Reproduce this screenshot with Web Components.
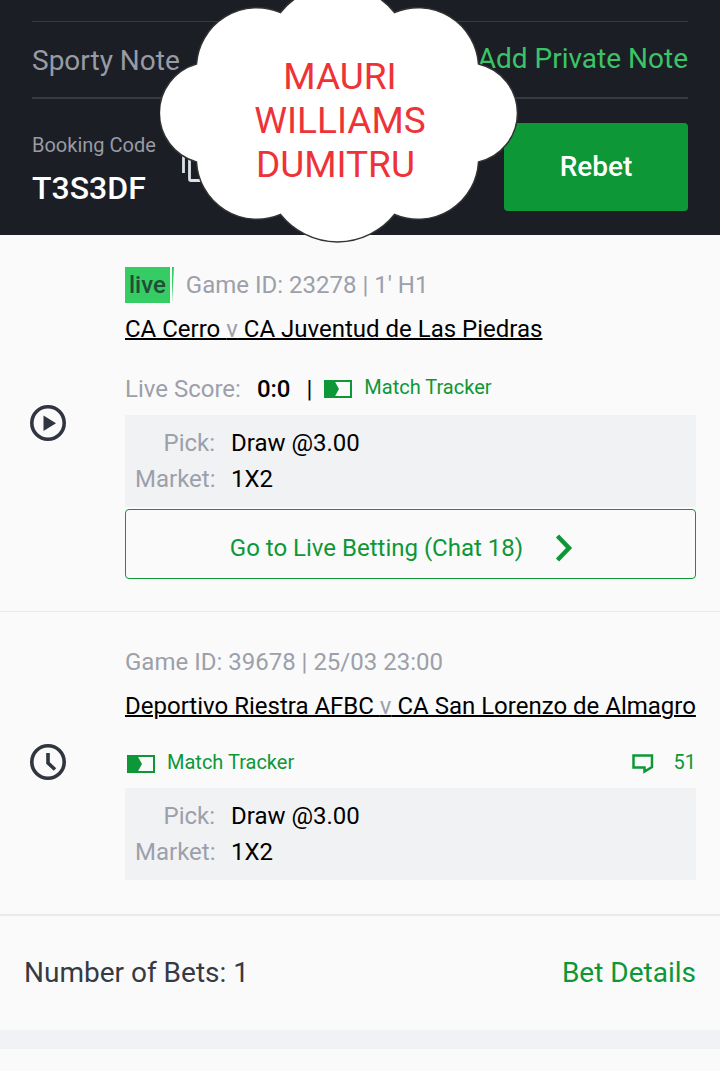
<!DOCTYPE html>
<html lang="en">
<head>
<meta charset="utf-8">
<meta name="viewport" content="width=device-width, initial-scale=1">
<title>Bet slip</title>
<style>
  body { margin: 0; background: #fafafa; color: #000; font-family: Roboto, sans-serif; font-size: 24px; line-height: 36px; }
</style>
</head>
<body>
<bet-page></bet-page>

<template id="t-bet-page">
  <style>
    :host { display: block; --green: #0d9737; --mint: #35cc62; --muted: #9ca0ab; --ink: #353a45; --panel: #f1f2f4; --rule: #e8e9eb; }
  </style>
  <slip-header code="T3S3DF">
    <name-cloud slot="overlay">MAURI<br>WILLIAMS<br>DUMITRU&nbsp;</name-cloud>
  </slip-header>
  <main>
    <bet-card status="live" home="CA Cerro" away="CA Juventud de Las Piedras">
      <live-badge slot="meta">live</live-badge>
      <span slot="meta">Game ID: 23278 | 1' H1</span>
      <live-score slot="info" score="0:0"></live-score>
      <match-tracker slot="info"></match-tracker>
      <pick-box slot="pick" pick="Draw @3.00" market="1X2"></pick-box>
      <live-link slot="pick">Go to Live Betting (Chat 18)</live-link>
    </bet-card>
    <bet-card status="pending" home="Deportivo Riestra AFBC" away="CA San Lorenzo de Almagro">
      <span slot="meta">Game ID: 39678 | 25/03 23:00</span>
      <match-tracker slot="info" class="lead"></match-tracker>
      <chat-count slot="info">51</chat-count>
      <pick-box slot="pick" pick="Draw @3.00" market="1X2"></pick-box>
    </bet-card>
  </main>
  <slip-footer>Number of Bets: 1</slip-footer>
</template>

<template id="t-slip-header">
  <style>
    :host { display: block; position: relative; background: #1b1e25; padding: 21px 32px 24px; }
    .note { display: flex; justify-content: space-between; align-items: center; height: 75px; border-top: 1px solid #363a43; border-bottom: 2px solid #363a43; font-size: 28px; }
    .note span { color: #989ba3; padding-top: 2px; }
    .note a { color: #3bc466; text-decoration: none; padding-bottom: 2px; }
    .booking { display: flex; align-items: center; padding-top: 24px; }
    .booking p { margin: 0; color: #989ba3; font-size: 20px; line-height: 44px; }
    .booking strong { display: block; padding-bottom: 2px; color: #fff; font-size: 32px; font-weight: 500; line-height: 42px; }
    .copy { margin-left: 26px; padding: 0; border: 0; background: none; height: 30px; }
    .copy svg { display: block; }
    .rebet { margin-left: auto; width: 184px; height: 88px; padding: 0 0 2px; border: 0; border-radius: 4px; background: var(--green); color: #fff; font: 500 28px Roboto, sans-serif; }
  </style>
  <div class="note"><span>Sporty Note</span><a href="#note">Add Private Note</a></div>
  <div class="booking">
    <p>Booking Code<strong></strong></p>
    <button class="copy" type="button" aria-label="Copy booking code">
      <svg width="26" height="30" viewBox="0 0 26 30" fill="none" stroke="#dce0ea" stroke-width="2.800"><path d="M1.500 21V1.500H18M7.500 7H24.500V28.500H9Q7.500 28.500 7.500 27z"/></svg>
    </button>
    <button class="rebet" type="button">Rebet</button>
  </div>
  <slot name="overlay"></slot>
</template>

<template id="t-name-cloud">
  <style>
    :host { position: absolute; left: calc(50% - 200px); top: 0; width: 358px; height: 244px; overflow: hidden; display: grid; place-items: start center; color: #ee3338; font-size: 37px; line-height: 44px; text-align: center; }
    svg { grid-area: 1 / 1; }
    div { grid-area: 1 / 1; position: relative; padding: 55px 0 0 2px; }
  </style>
  <svg width="358" height="244" viewBox="160 0 358 244" aria-hidden="true">
    <path d="M196.500 64A60.600 60.600 0 0 1 280.500 12.500A73 73 0 0 1 394.500 12.500A60.600 60.600 0 0 1 478.500 64A50.300 50.300 0 0 1 478.500 162A60.600 60.600 0 0 1 394.500 214.500A73 73 0 0 1 280.500 214.500A60.600 60.600 0 0 1 196.500 162A50.900 50.900 0 0 1 196.500 64z" fill="#fff" stroke="#333" stroke-width="1.500"/>
  </svg>
  <div><slot></slot></div>
</template>

<template id="t-bet-card">
  <style>
    :host { display: grid; grid-template-columns: 36px minmax(0, 1fr); column-gap: 59px; align-items: center; padding: 32px 24px 32px 30px; border-bottom: 1px solid var(--rule); }
    :host([status="pending"]) { padding-bottom: 34px; border-bottom-width: 2px; }
    :host([status="pending"]) .info { height: 32px; }
    .icon { display: block; }
    .meta { display: flex; color: var(--muted); }
    .teams { display: block; margin: 8px 0 24px; color: #000; white-space: nowrap; text-decoration: underline; text-decoration-thickness: 2px; }
    .teams span { color: var(--muted); }
    .info { display: flex; height: 36px; margin-bottom: 8px; }
  </style>
  <svg class="icon" width="36" height="36" viewBox="0 0 36 36"><circle cx="18" cy="18" r="16.200" fill="none" stroke="#30353f" stroke-width="3.600"/><path class="glyph"/></svg>
  <article>
    <div class="meta"><slot name="meta"></slot></div>
    <a class="teams" href="#match"></a>
    <div class="info"><slot name="info"></slot></div>
    <slot name="pick"></slot>
  </article>
</template>

<template id="t-live-badge">
  <style>
    :host { display: flex; margin-right: 12px; }
    span { padding: 0 4px; background: #35cd63; color: #234b35; font-weight: 500; }
    svg { display: block; margin-left: 1px; }
  </style>
  <span><slot></slot></span><svg width="3" height="36" viewBox="0 0 3 36" aria-hidden="true"><path d="M1 0H3L1 36z" fill="#35cd63"/></svg>
</template>

<template id="t-live-score">
  <style>
    :host { display: flex; gap: 16px; margin-right: 12px; color: var(--muted); }
    b { color: #000; font-weight: 500; }
    i { color: #000; font-style: normal; }
  </style>
  <span>Live Score:</span><b></b><i>|</i>
</template>

<template id="t-match-tracker">
  <style>
    :host { display: block; }
    :host(.lead) { margin-left: 2px; }
    :host(.lead) a { line-height: 28px; }
    :host(.lead) svg { margin-top: 7px; }
    a { display: flex; gap: 12px; color: var(--green); text-decoration: none; font-size: 20px; line-height: 32px; }
    svg { margin-top: 9px; }
  </style>
  <a href="#tracker"><svg width="28" height="18" viewBox="0 0 28 18" aria-hidden="true"><path d="M1 1H27V17H1z" fill="none" stroke="#0d9737" stroke-width="2"/><path d="M0 0H10L15 9L10 18H0z" fill="#0d9737"/></svg>Match Tracker</a>
</template>

<template id="t-chat-count">
  <style>
    :host { display: block; margin-left: auto; }
    a { display: flex; gap: 20px; color: var(--green); text-decoration: none; font-size: 20px; line-height: 28px; }
    svg { margin-top: 6px; }
  </style>
  <a href="#chat"><svg width="22" height="20" viewBox="0 0 22 20" fill="none" stroke="#0d9737" stroke-width="2.500" aria-hidden="true"><path d="M1.500 1.500H20V13L12.500 17.500V13.500H1.500z"/></svg><slot></slot></a>
</template>

<template id="t-pick-box">
  <style>
    :host { display: block; background: var(--panel); padding: 10px; }
    dl { display: grid; grid-template-columns: 80px 1fr; column-gap: 16px; margin: 0; }
    dt { color: var(--muted); text-align: right; }
    dd { margin: 0; }
  </style>
  <dl><dt>Pick:</dt><dd class="pick"></dd><dt>Market:</dt><dd class="market"></dd></dl>
</template>

<template id="t-live-link">
  <style>
    :host { display: block; margin-top: 2px; }
    a { box-sizing: border-box; display: flex; justify-content: center; align-items: center; gap: 32px; height: 70px; padding: 8px 18px 0 0; border: 1px solid var(--green); border-radius: 4px; color: var(--green); text-decoration: none; }
  </style>
  <a href="#live"><span><slot></slot></span><svg width="18" height="28" viewBox="0 0 18 28" fill="none" stroke="#0d9737" stroke-width="4.500" aria-hidden="true"><path d="M2.500 2L14 14L2.500 26"/></svg></a>
</template>

<template id="t-slip-footer">
  <style>
    :host { display: flex; justify-content: space-between; align-items: center; height: 114px; padding: 0 24px; border-bottom: 19px solid #f1f2f6; color: var(--ink); font-size: 28px; }
    a { color: var(--green); text-decoration: none; }
  </style>
  <slot></slot><a href="#details">Bet Details</a>
</template>

<script>
  class TemplateElement extends HTMLElement {
    constructor() {
      super();
      const template = document.getElementById('t-' + this.localName);
      this.attachShadow({ mode: 'open' }).append(template.content.cloneNode(true));
    }
    find(selector) { return this.shadowRoot.querySelector(selector); }
  }

  class SlipHeader extends TemplateElement {
    connectedCallback() { this.find('strong').textContent = this.getAttribute('code'); }
  }

  class BetCard extends TemplateElement {
    connectedCallback() {
      const versus = document.createElement('span');
      versus.textContent = 'v';
      this.find('.teams').replaceChildren(this.getAttribute('home') + ' ', versus, ' ' + this.getAttribute('away'));
      const glyph = this.find('.glyph');
      if (this.getAttribute('status') === 'live') {
        glyph.setAttribute('d', 'M13.5 10.5V26L26 18.2z');
        glyph.setAttribute('fill', '#30353f');
      } else {
        glyph.setAttribute('d', 'M18 9V19L25 25.5');
        glyph.setAttribute('fill', 'none');
        glyph.setAttribute('stroke', '#30353f');
        glyph.setAttribute('stroke-width', '3.6');
      }
    }
  }

  class LiveScore extends TemplateElement {
    connectedCallback() { this.find('b').textContent = this.getAttribute('score'); }
  }

  class PickBox extends TemplateElement {
    connectedCallback() {
      this.find('.pick').textContent = this.getAttribute('pick');
      this.find('.market').textContent = this.getAttribute('market');
    }
  }

  customElements.define('name-cloud', class extends TemplateElement {});
  customElements.define('slip-header', SlipHeader);
  customElements.define('live-badge', class extends TemplateElement {});
  customElements.define('live-score', LiveScore);
  customElements.define('match-tracker', class extends TemplateElement {});
  customElements.define('chat-count', class extends TemplateElement {});
  customElements.define('pick-box', PickBox);
  customElements.define('live-link', class extends TemplateElement {});
  customElements.define('bet-card', BetCard);
  customElements.define('slip-footer', class extends TemplateElement {});
  customElements.define('bet-page', class extends TemplateElement {});
</script>
</body>
</html>
